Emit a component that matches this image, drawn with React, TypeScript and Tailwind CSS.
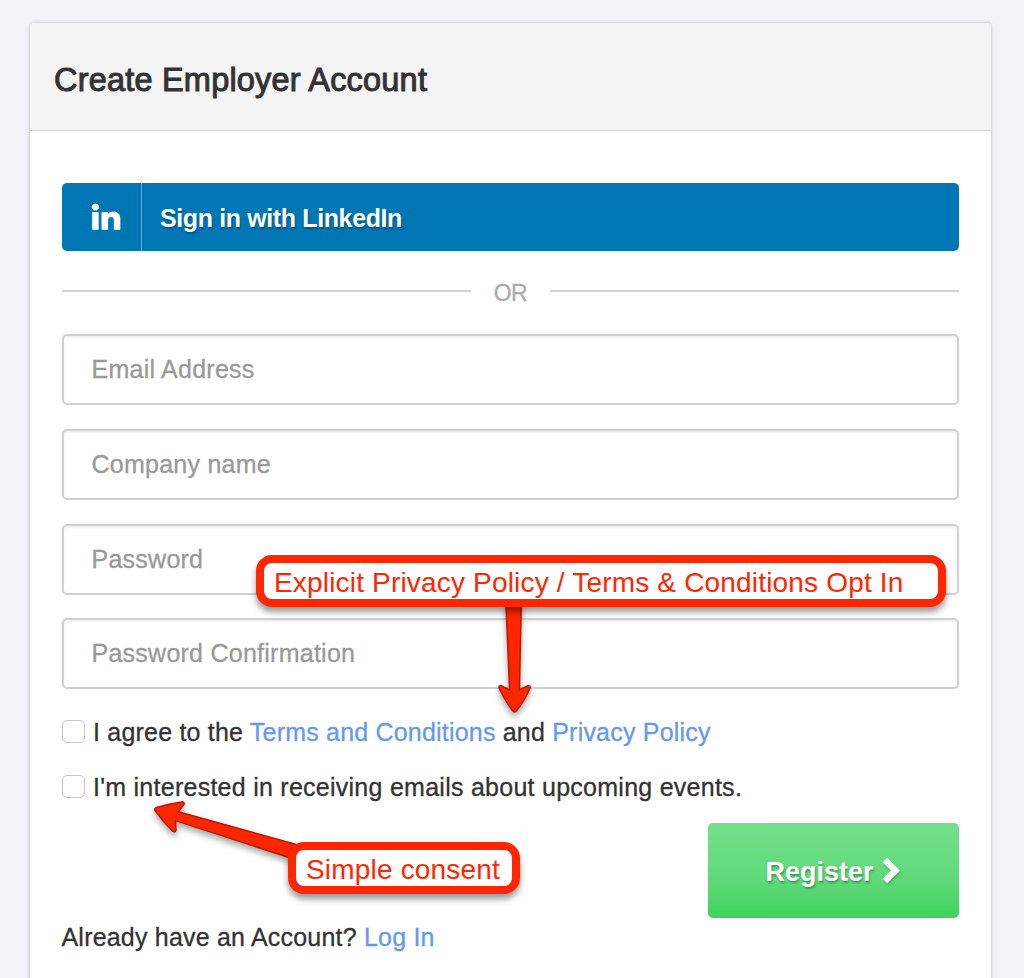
import { FaLinkedinIn } from 'react-icons/fa'

const fields = [
  { label: 'Email Address', type: 'email' },
  { label: 'Company name', type: 'text' },
  { label: 'Password', type: 'password' },
  { label: 'Password Confirmation', type: 'password' },
]

function Checkbox() {
  return (
    <input
      type="checkbox"
      className="h-[23px] w-[23px] shrink-0 appearance-none rounded-[5px] border-[1.5px] border-[#c6c6c6] bg-white"
    />
  )
}

function Callout({ className, children }: { className: string; children: string }) {
  return (
    <div
      className={`absolute flex h-[52px] items-center whitespace-nowrap rounded-2xl border-8 border-[#ff2600] bg-white pl-[10px] pt-[4px] text-[28px] leading-none tracking-[0.18px] text-[#ff2600] shadow-[0_5px_6px_rgba(0,0,0,0.4)] ${className}`}
    >
      {children}
    </div>
  )
}

function Arrows() {
  return (
    <svg
      className="pointer-events-none absolute inset-0 h-[978px] w-[1024px] drop-shadow-[0_4px_3px_rgba(0,0,0,0.35)]"
      viewBox="0 0 1024 978"
      fill="#ff2600"
      stroke="#b51a00"
      strokeWidth="1.5"
      strokeLinejoin="round"
    >
      <path d="M505.8 600 L509.6 689.8 L501.5 685.8 Q498.3 685 499.2 688.2 Q504 699 512.6 710.8 Q514.6 713.2 516.6 710.8 Q525.5 699 530 688.2 Q530.8 685 527.5 685.8 L519.4 689.8 L521.4 600 Z" />
      <path d="M300 845.5 L178.3 811.8 L183.8 804.8 Q185 801.6 181.6 801.9 Q167 804 155.8 807.8 Q154 809 155.2 810.8 Q162.5 821 172.6 831.2 Q175.6 833 176 829.8 L175.4 820.6 L292 858.5 Z" />
    </svg>
  )
}

export default function App() {
  return (
    <main className="relative h-[978px] w-[1024px] overflow-hidden bg-[#f1f3f8] pl-[29px] pt-[22px] font-['Liberation_Sans',Arial,sans-serif] text-[#333]">
      <section className="h-[1000px] w-[963px] rounded-t-[5px] border border-[#d9dadd] bg-white shadow-[0_0_3px_rgba(0,0,0,0.15)]">
        <header className="flex h-[108px] items-center rounded-t-[4px] border-b border-[#d4d4d4] bg-[#f4f4f4] pl-[24px] pt-[7px]">
          <h1 className="text-[32.5px] leading-none tracking-[0.2px] [-webkit-text-stroke:1px_#333]">
            Create Employer Account
          </h1>
        </header>

        <form className="pl-[31.5px] pr-[32px] pt-[52px]">
          <button
            type="button"
            className="flex h-[68px] w-full items-center rounded-[5px] bg-[#0077b5] text-white"
          >
            <span className="flex h-full w-[80.5px] items-center justify-end border-r border-[#66add3] pr-[21.5px]">
              <FaLinkedinIn
                className="mt-[2px] h-[29px] w-[28px] overflow-visible"
                preserveAspectRatio="none"
                strokeWidth={12}
              />
            </span>
            <span className="pl-[18px] pt-[3px] text-[25px] font-bold leading-none tracking-[-0.38px] [text-shadow:1px_2px_2px_rgba(0,0,0,0.3)]">
              Sign in with LinkedIn
            </span>
          </button>

          <div className="flex h-[83px] items-center text-[#aaa]">
            <hr className="mb-[3px] w-[409px] border-t-2 border-[#d2d2d2]" />
            <span className="flex-1 pt-[2px] text-center text-[23px] leading-none tracking-[-0.8px] [-webkit-text-stroke:0.3px_#aaa]">
              OR
            </span>
            <hr className="mb-[3px] w-[409px] border-t-2 border-[#d2d2d2]" />
          </div>

          <div className="flex flex-col gap-[23.8px]">
            {fields.map((field) => (
              <input
                key={field.label}
                type={field.type}
                placeholder={field.label}
                className="h-[71px] w-full rounded-[5px] border-2 border-[#d0d0d0] bg-white pl-[28px] text-[25px] tracking-[0.25px] shadow-[inset_0_2px_2px_rgba(0,0,0,0.06)] [-webkit-text-stroke:0.3px_#999] placeholder:text-[#999]"
              />
            ))}
          </div>

          <div className="mt-[31px] flex flex-col gap-8 text-[25px] leading-none [-webkit-text-stroke:0.3px]">
            <label className="flex h-[23px] items-center gap-[8.5px]">
              <Checkbox />
              <span className="whitespace-nowrap pt-px tracking-[0.2px]">
                I agree to the <a className="text-[#6699ee]">Terms and Conditions</a> and{' '}
                <a className="text-[#6699ee]">Privacy Policy</a>
              </span>
            </label>
            <label className="flex h-[23px] items-center gap-[8.5px]">
              <Checkbox />
              <span className="whitespace-nowrap pt-px tracking-[0.26px]">
                I'm interested in receiving emails about upcoming events.
              </span>
            </label>
          </div>

          <div className="mt-[25px] flex items-start justify-between">
            <p className="pt-[102px] text-[25px] leading-none tracking-[0.2px] [-webkit-text-stroke:0.3px]">
              Already have an Account? <a className="text-[#6699ee]">Log In</a>
            </p>
            <button
              type="submit"
              className="flex h-[95px] w-[251px] items-center justify-center gap-2 rounded-[5px] bg-linear-to-b from-[#75e08c] via-[#5fd97a] via-60% to-[#3dd35c] pr-[2px] text-white"
            >
              <span className="pt-[4px] text-[27px] font-bold leading-none [text-shadow:1px_2px_2px_rgba(0,0,0,0.3)]">
                Register
              </span>
              <svg
                className="h-[28px] w-[18px] drop-shadow-[1px_2px_1px_rgba(0,0,0,0.2)]"
                viewBox="0 0 18 28"
                fill="none"
                stroke="white"
                strokeWidth="6.5"
              >
                <path d="M3 3 L13.5 13.5 L3 24" />
              </svg>
            </button>
          </div>
        </form>
      </section>

      {/* Annotations */}
      <Arrows />
      <Callout className="left-[256px] top-[555px] w-[690px]">
        Explicit Privacy Policy / Terms & Conditions Opt In
      </Callout>
      <Callout className="left-[288px] top-[842px] w-[231.5px]">Simple consent</Callout>
    </main>
  )
}
